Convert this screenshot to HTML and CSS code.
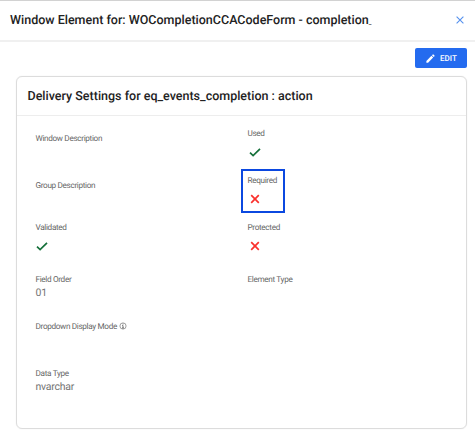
FILE: index.html
```html
<!DOCTYPE html>
<html lang="en">
<head>
<meta charset="utf-8">
<title>Window Element</title>
<link rel="stylesheet" href="styles.css">
</head>
<body>
<svg class="defs" aria-hidden="true">
  <symbol id="check" viewBox="0 0 12 12"><path d="M1 6.7 4.1 9.6 11 2.8" fill="none" stroke="#15703a" stroke-width="1.7"/></symbol>
  <symbol id="cross" viewBox="0 0 12 12"><path d="M2.2 2.2 9.8 9.8M9.8 2.2 2.2 9.8" fill="none" stroke="#fa302c" stroke-width="1.7"/></symbol>
</svg>
<div class="dialog">
  <header class="dialog-header">
    <h1 class="dialog-title">Window Element for: WOCompletionCCACodeForm - completion<span class="tail">_</span></h1>
    <svg class="close" viewBox="0 0 8 8"><path d="M.6.6 7.4 7.4M7.4.6.6 7.4" fill="none" stroke="#5591ee" stroke-width="1.1"/></svg>
  </header>
  <div class="toolbar">
    <button class="edit">
      <svg class="pencil" viewBox="0 0 24 24"><path fill="#fff" d="M3 17.25V21h3.75L17.81 9.94l-3.75-3.75L3 17.25zM20.71 7.04a1 1 0 0 0 0-1.41l-2.34-2.34a1 1 0 0 0-1.41 0l-1.83 1.83 3.75 3.75 1.83-1.83z"/></svg>
      <span class="edit-text">EDIT</span>
    </button>
  </div>
  <section class="card">
    <h2 class="card-title">Delivery Settings for eq_events_completion : action</h2>
    <div class="fields">
      <div class="field low"><span class="label">Window Description</span></div>
      <div class="field"><span class="label">Used</span><svg class="mark"><use href="#check"/></svg></div>
      <div class="field low"><span class="label">Group Description</span></div>
      <div class="field highlighted"><span class="label">Required</span><svg class="mark"><use href="#cross"/></svg></div>
      <div class="field"><span class="label">Validated</span><svg class="mark"><use href="#check"/></svg></div>
      <div class="field"><span class="label">Protected</span><svg class="mark"><use href="#cross"/></svg></div>
      <div class="field low"><span class="label">Field Order</span><span class="value">01</span></div>
      <div class="field low"><span class="label">Element Type</span></div>
      <div class="field low wide"><span class="label">Dropdown Display Mode<svg class="info" viewBox="0 0 8 8"><circle cx="4" cy="4" r="3.1" fill="none" stroke="#777" stroke-width=".7"/><path d="M4 1.6V2.5M3.2 3.5H4V6M3 6H5" fill="none" stroke="#555" stroke-width=".8"/></svg></span></div>
      <div class="field low wide"><span class="label">Data Type</span><span class="value">nvarchar</span></div>
    </div>
  </section>
</div>
</body>
</html>
```

FILE: styles.css
```css
*, *::after { box-sizing: border-box; }
body { margin: 0; background: #fff; font-family: Roboto, "Liberation Sans", sans-serif; overflow: hidden; text-rendering: geometricPrecision; }
.defs { display: none; }
.dialog { height: 432px; border-top: 1px solid #d2d2d2; }
.dialog-header { display: flex; align-items: center; justify-content: space-between; height: 41px; padding: 0 11px 2px 10px; border-bottom: 2px solid #f0f0f0; }
.dialog-title, .card-title { margin: 0; font-size: 12.5px; font-weight: 500; color: #222; white-space: nowrap; }
.dialog-title { padding-top: 4px; line-height: 16px; }
.tail { font-size: 6px; }
.close { width: 8px; height: 8px; }
.toolbar { display: flex; justify-content: flex-end; padding: 6px 8px 8px; }
.edit { display: flex; align-items: center; width: 52px; height: 20px; padding: 1px 0 0 10px; border: 0; border-radius: 2px; background: #246bef; color: #fff; font: 500 8px Roboto, sans-serif; text-rendering: geometricPrecision; }
.pencil { width: 11px; height: 11px; margin: 0 4px 1px 0; }
.card { margin: 0 8px 0 16px; height: 353px; border: 1px solid #dcdcdc; border-radius: 6px; box-shadow: 0 0 1px #ddd; }
.card-title { height: 39px; padding-left: 10.5px; line-height: 39px; border-bottom: 1px solid #ededed; }
.fields { display: grid; grid-template-columns: 212px 1fr; grid-template-rows: repeat(6, 47px); padding: 12px 0 0 18.5px; }
.field { position: relative; display: flex; flex-direction: column; align-items: flex-start; }
.low { padding-top: 5px; }
.wide { grid-column: 1 / -1; }
.label { display: flex; height: 12px; line-height: 12px; font-size: 8.2px; letter-spacing: -.34px; color: #666; white-space: nowrap; }
.value { height: 14px; line-height: 13px; font-size: 10.5px; letter-spacing: -.25px; color: #737373; }
.mark { width: 12px; height: 12px; margin: 6px 0 0 1px; }
.field:nth-child(5) .mark { margin-left: 0; }
.info { width: 8px; height: 8px; margin: 1px 0 0 2.5px; }
.highlighted::after { content: ""; position: absolute; left: -6.5px; top: -6px; width: 44px; height: 44px; border: 2px solid #0b48e0; }
```
